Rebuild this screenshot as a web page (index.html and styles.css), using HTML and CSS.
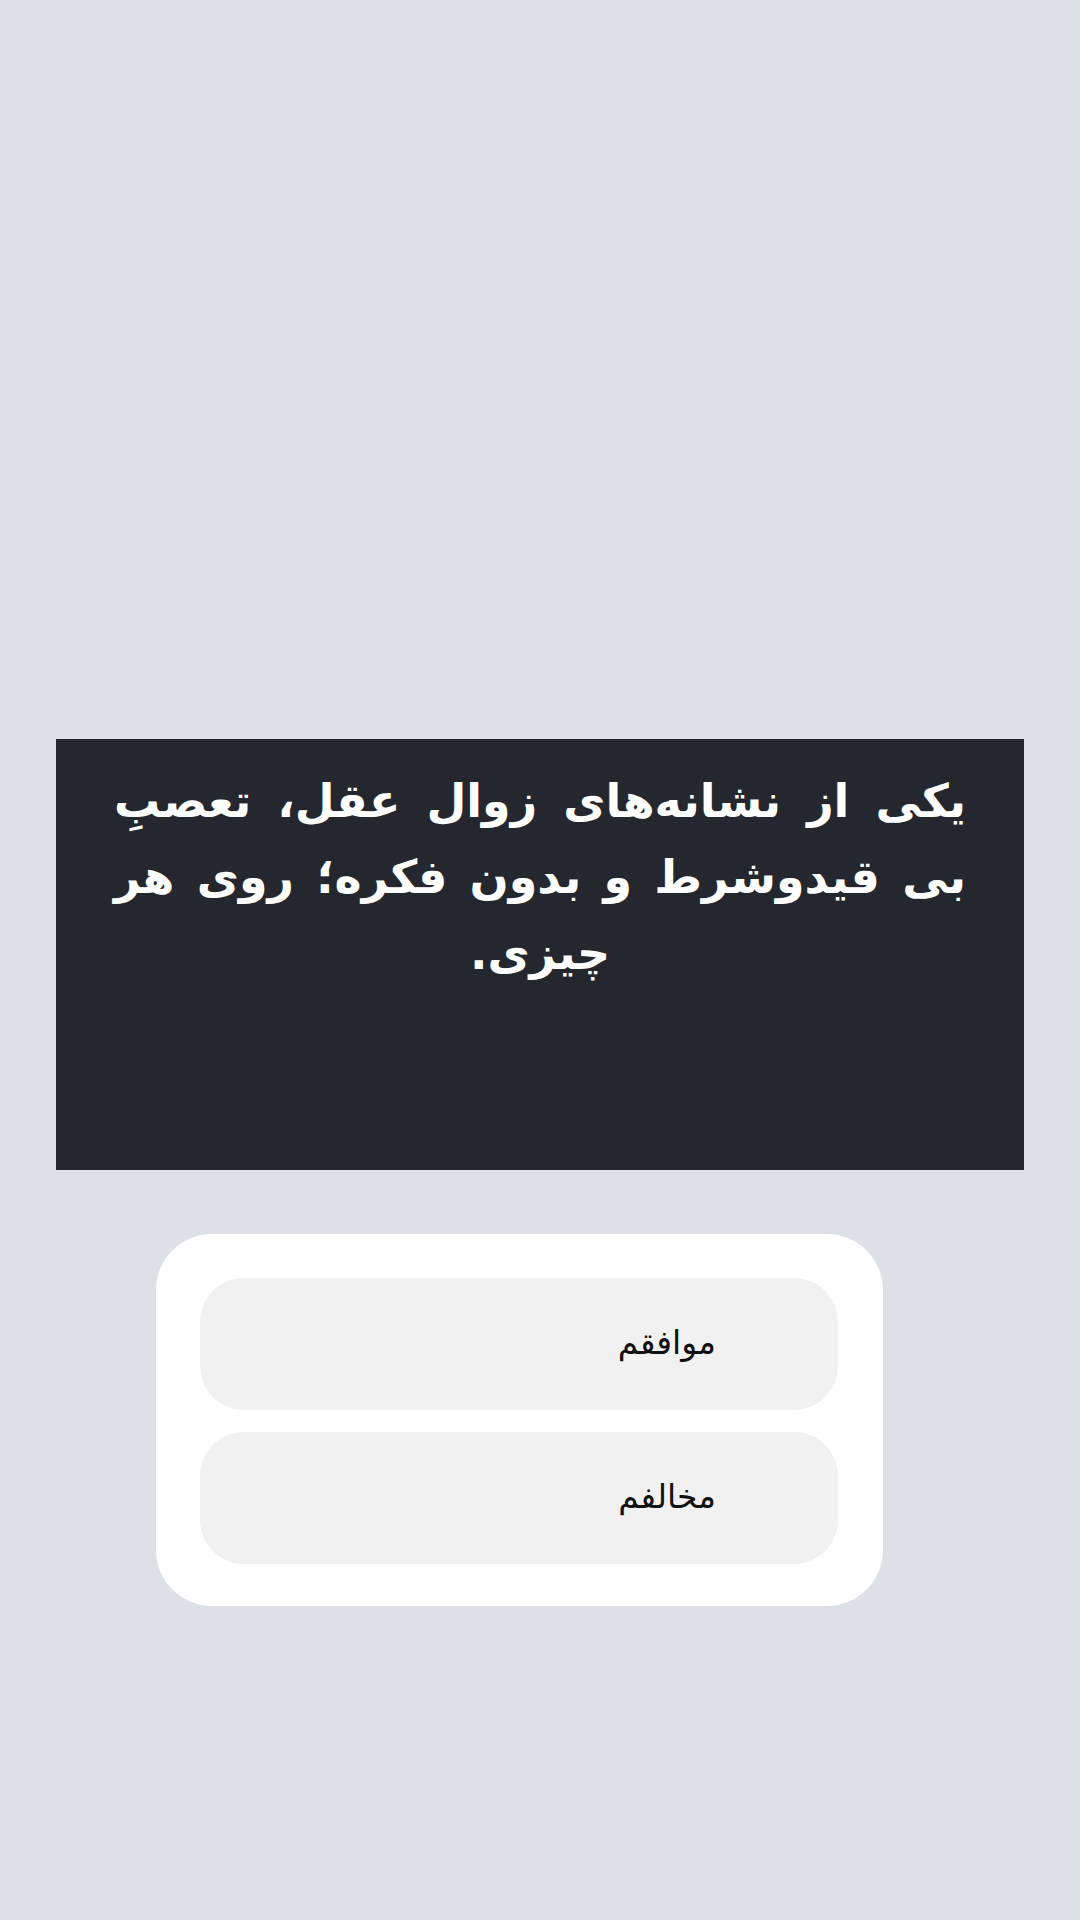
FILE: index.html
```html
<!DOCTYPE html>
<html lang="fa" dir="rtl">
<head>
  <meta charset="UTF-8" />
  <meta name="viewport" content="width=device-width, initial-scale=1.0" />
  <title>نظرسنجی</title>
  <link rel="stylesheet" href="styles.css">
</head>
<body>

<div class="page">
  <div class="quote-box">
    <p class="quote">یکی از نشانه‌های زوال عقل، تعصبِ بی قیدوشرط و بدون فکره؛ روی هر چیزی.</p>
  </div>

  <div class="vote-card">
    <button type="button" class="vote-btn">موافقم</button>
    <button type="button" class="vote-btn">مخالفم</button>
  </div>
</div>

</body>
</html>
```

FILE: styles.css
```css
body {
  margin: 0;
  padding: 0;
  background-color: #dde0e5;
  font-family: 'DejaVu Sans', 'Noto Sans', sans-serif;
  min-height: 100vh;
}

.page {
  display: flex;
  flex-direction: column;
  align-items: flex-start;
  direction: ltr;
  padding-top: 739px;
}

.quote-box {
  box-sizing: border-box;
  width: 968px;
  height: 431px;
  margin-left: 56px;
  padding: 24px 58px 0 58px;
  background-color: #25272e;
  direction: rtl;
}

.quote {
  margin: 0;
  color: #fff;
  font-size: 46px;
  font-weight: bold;
  line-height: 76px;
  text-align: justify;
  text-align-last: center;
}

.vote-card {
  box-sizing: border-box;
  width: 727px;
  margin: 64px 0 0 156px;
  padding: 44px 45px 42px 44px;
  background-color: #fff;
  border-radius: 56px;
  display: flex;
  flex-direction: column;
  gap: 22px;
  direction: rtl;
}

.vote-btn {
  width: 100%;
  height: 132px;
  padding: 0 122px 4px 0;
  border: none;
  border-radius: 44px;
  background-color: #f1f1f2;
  color: #111;
  font-family: inherit;
  font-size: 33px;
  text-align: right;
  cursor: pointer;
}
```
